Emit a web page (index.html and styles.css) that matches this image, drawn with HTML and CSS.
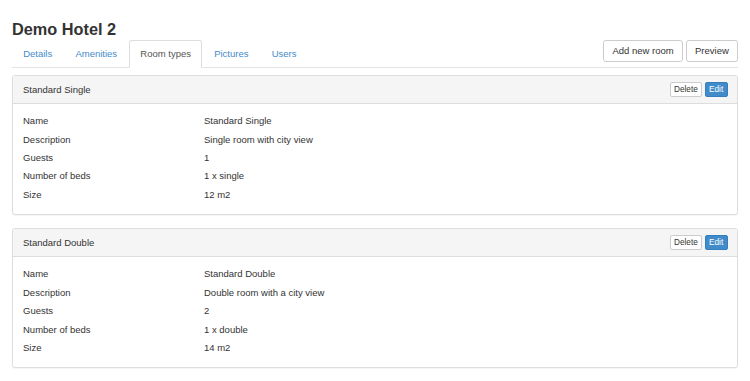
FILE: index.html
```html
<!DOCTYPE html>
<html lang="en">
<head>
  <meta charset="UTF-8">
  <meta name="viewport" content="width=device-width, initial-scale=1.0">
  <title>Demo Hotel 2</title>
  <link rel="stylesheet" href="styles.css">
</head>
<body>
  <div class="page">
    <h1 class="hotel-title">Demo Hotel 2</h1>

    <div class="toolbar">
      <ul class="nav-tabs">
        <li><a href="#">Details</a></li>
        <li><a href="#">Amenities</a></li>
        <li class="active"><a href="#">Room types</a></li>
        <li><a href="#">Pictures</a></li>
        <li><a href="#">Users</a></li>
      </ul>
      <div class="actions">
        <button class="btn">Add new room</button>
        <button class="btn">Preview</button>
      </div>
    </div>

    <div class="panel">
      <div class="panel-heading">
        <span class="panel-title">Standard Single</span>
        <div class="panel-buttons">
          <button class="btn-xs">Delete</button>
          <button class="btn-xs btn-primary">Edit</button>
        </div>
      </div>
      <dl class="panel-body">
        <dt>Name</dt><dd>Standard Single</dd>
        <dt>Description</dt><dd>Single room with city view</dd>
        <dt>Guests</dt><dd>1</dd>
        <dt>Number of beds</dt><dd>1 x single</dd>
        <dt>Size</dt><dd>12 m2</dd>
      </dl>
    </div>

    <div class="panel">
      <div class="panel-heading">
        <span class="panel-title">Standard Double</span>
        <div class="panel-buttons">
          <button class="btn-xs">Delete</button>
          <button class="btn-xs btn-primary">Edit</button>
        </div>
      </div>
      <dl class="panel-body">
        <dt>Name</dt><dd>Standard Double</dd>
        <dt>Description</dt><dd>Double room with a city view</dd>
        <dt>Guests</dt><dd>2</dd>
        <dt>Number of beds</dt><dd>1 x double</dd>
        <dt>Size</dt><dd>14 m2</dd>
      </dl>
    </div>
  </div>
</body>
</html>
```

FILE: styles.css
```css
*, *::before, *::after { box-sizing: border-box; }
body { margin: 0; background-color: #fff; color: #333; font-family: "Liberation Sans", Arial, Helvetica, sans-serif; font-size: 9.5px; }
.page { padding: 20px 12px 0; }

/* タイトル */
.hotel-title { margin: 0 0 2px; font-size: 16.3px; line-height: 18px; font-weight: bold; color: #333; }

/* タブとボタン */
.toolbar { display: flex; justify-content: space-between; align-items: flex-start; border-bottom: 1px solid #e3e3e3; margin-bottom: 7px; }
.nav-tabs { display: flex; list-style: none; margin: 0 0 -1px; padding: 0; }
.nav-tabs li { margin-right: 1.2px; }
.nav-tabs a { display: block; padding: 6.2px 9.8px 6.2px 10.2px; line-height: 13.6px; border: 1px solid transparent; border-radius: 2.7px 2.7px 0 0; color: #428bca; text-decoration: none; }
.nav-tabs .active a { color: #555; background-color: #fff; border-color: #ddd #ddd transparent; }

.actions { display: flex; gap: 3px; }
.btn { padding: 3.2px 8.2px; line-height: 13.6px; font-family: inherit; font-size: 9.5px; color: #333; background-color: #fff; border: 1px solid #ccc; border-radius: 2.7px; }

/* パネル */
.panel { border: 1px solid #ddd; border-radius: 2.7px; margin-bottom: 13.6px; background-color: #fff; box-shadow: 0 1px 1px rgba(0,0,0,0.04); }
.panel-heading { display: flex; justify-content: space-between; align-items: center; height: 28.2px; padding: 6.8px 9.4px 6.8px 10px; background-color: #f5f5f5; border-bottom: 1px solid #ddd; border-radius: 2px 2px 0 0; line-height: 13.6px; }
.panel-buttons { display: flex; gap: 2.6px; }
.btn-xs { padding: 0.7px 3.4px; line-height: 11.6px; font-family: inherit; font-size: 8.2px; color: #333; background-color: #fff; border: 1px solid #ccc; border-radius: 2px; }
.btn-primary { color: #fff; background-color: #428bca; border-color: #357ebd; }

.panel-body { display: grid; grid-template-columns: 181px 1fr; margin: 0; padding: 8px 10px 9.5px; line-height: 18.4px; }
.panel-body dt, .panel-body dd { margin: 0; font-weight: normal; }
```
